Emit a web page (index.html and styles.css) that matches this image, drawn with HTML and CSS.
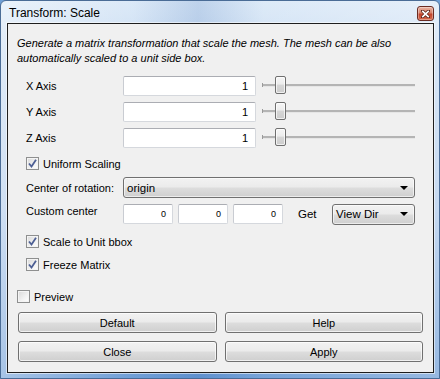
FILE: index.html
```html
<!DOCTYPE html>
<html>
<head>
<meta charset="utf-8">
<link rel="stylesheet" href="styles.css">
</head>
<body>
<div class="window">
  <div class="titlebar">
    <span class="title">Transform: Scale</span>
    <div class="close-btn">
      <svg width="9" height="8" viewBox="0 0 9 8"><path d="M1 0.5 L8 7.5 M8 0.5 L1 7.5" stroke="#5a2318" stroke-width="3.2" stroke-linecap="square"/><path d="M1.2 0.8 L7.8 7.2 M7.8 0.8 L1.2 7.2" stroke="#fff" stroke-width="1.7"/></svg>
    </div>
  </div>
  <div class="client">
    <p class="desc">Generate a matrix transformation that scale the mesh. The mesh can be also<br>automatically scaled to a unit side box.</p>
    <div class="form">
      <div class="axis-row">
        <span class="label">X Axis</span>
        <div class="field">1</div>
        <div class="slider"><span class="tick"></span><div class="thumb"></div></div>
      </div>
      <div class="axis-row">
        <span class="label">Y Axis</span>
        <div class="field">1</div>
        <div class="slider"><span class="tick"></span><div class="thumb"></div></div>
      </div>
      <div class="axis-row">
        <span class="label">Z Axis</span>
        <div class="field">1</div>
        <div class="slider"><span class="tick"></span><div class="thumb"></div></div>
      </div>
      <div class="check-row uniform">
        <span class="checkbox checked"><svg width="9" height="9" viewBox="0 0 9 9"><path d="M1 4.5 L3.5 7.5 L8 0.8" fill="none" stroke="#4d5f94" stroke-width="1.8"/></svg></span>
        <span>Uniform Scaling</span>
      </div>
      <div class="combo-row">
        <span class="label">Center of rotation:</span>
        <div class="combo wide"><span>origin</span><span class="arrow"></span></div>
      </div>
      <div class="custom-row">
        <span class="label custom-label">Custom center</span>
        <div class="small-field">0</div>
        <div class="small-field">0</div>
        <div class="small-field">0</div>
        <span class="get">Get</span>
        <div class="combo view"><span>View Dir</span><span class="arrow"></span></div>
      </div>
      <div class="check-row scale">
        <span class="checkbox checked"><svg width="9" height="9" viewBox="0 0 9 9"><path d="M1 4.5 L3.5 7.5 L8 0.8" fill="none" stroke="#4d5f94" stroke-width="1.8"/></svg></span>
        <span>Scale to Unit bbox</span>
      </div>
      <div class="check-row freeze">
        <span class="checkbox checked"><svg width="9" height="9" viewBox="0 0 9 9"><path d="M1 4.5 L3.5 7.5 L8 0.8" fill="none" stroke="#4d5f94" stroke-width="1.8"/></svg></span>
        <span>Freeze Matrix</span>
      </div>
    </div>
    <div class="check-row preview">
      <span class="checkbox"></span>
      <span>Preview</span>
    </div>
    <div class="buttons">
      <div class="btn">Default</div>
      <div class="btn">Help</div>
      <div class="btn">Close</div>
      <div class="btn">Apply</div>
    </div>
  </div>
</div>
</body>
</html>
```
FILE: styles.css
```css
* { box-sizing: border-box; }
html, body { margin: 0; padding: 0; }
body {
  width: 440px;
  height: 379px;
  overflow: hidden;
  font-family: "Liberation Sans", Arial, sans-serif;
  font-size: 11px;
  color: #000;
  background: #6f9fd6;
}
.window {
  width: 440px;
  height: 379px;
  display: flex;
  flex-direction: column;
  border: 1px solid #4a6c96;
  border-radius: 6px 6px 0 0;
  padding: 0 5px 5px 6px;
  background:
    linear-gradient(90deg, rgba(255,255,255,0.45) 0%, rgba(255,255,255,0.1) 30%, rgba(90,130,190,0.2) 45%, rgba(255,255,255,0.15) 60%, rgba(255,255,255,0.35) 100%),
    linear-gradient(180deg, #d8e7f7 0%, #c4d9f0 15%, #a9c6e9 55%, #5f93d2 100%);
}
.titlebar {
  height: 22px;
  flex: none;
  display: flex;
  align-items: center;
  justify-content: space-between;
  padding-left: 2px;
}
.title {
  font-size: 12px;
  color: #000;
  padding-top: 1px;
}
.close-btn {
  width: 17px;
  height: 15px;
  margin-top: 3px;
  border: 1px solid #6a2b22;
  border-radius: 3px;
  background: linear-gradient(180deg, #e9b3a2 0%, #d8826b 45%, #c2432b 55%, #d66a4c 100%);
  display: flex;
  align-items: center;
  justify-content: center;
  box-shadow: inset 0 0 0 1px rgba(255,255,255,0.35);
}
.client {
  flex: 1;
  background: #f0f0f0;
  border: 1px solid #1e1e1e;
  box-shadow: 0 0 0 1px rgba(255,255,255,0.55);
  display: flex;
  flex-direction: column;
}
.desc {
  margin: 12px 0 0 9px;
  font-style: italic;
  line-height: 15px;
  color: #000;
  white-space: nowrap;
}
.form {
  margin: 10px 18px 0 18px;
  display: flex;
  flex-direction: column;
}
.axis-row {
  display: grid;
  grid-template-columns: 97px 133px 1fr;
  align-items: center;
  height: 20px;
  margin-bottom: 6px;
}
.field, .small-field {
  height: 20px;
  background: #fff;
  border: 1px solid #d5d8dd;
  border-top-color: #abadb3;
  border-left-color: #c9ccd2;
  border-radius: 2px;
  text-align: right;
  padding-right: 7px;
  line-height: 18px;
}
.small-field {
  width: 50px;
  font-size: 9px;
  padding-right: 6px;
}
.slider {
  position: relative;
  height: 20px;
  margin-left: 6px;
}
.slider::before {
  content: "";
  position: absolute;
  left: 0;
  right: 0;
  top: 8px;
  height: 2px;
  background: #b4b4b4;
  border-bottom: 1px solid #e6e6e6;
}
.tick {
  position: absolute;
  left: 0;
  top: 7px;
  width: 1px;
  height: 4px;
  background: #9a9a9a;
}
.thumb {
  position: absolute;
  left: 13px;
  top: 0;
  width: 11px;
  height: 18px;
  border: 1px solid #6f6f6f;
  border-radius: 2px;
  background: linear-gradient(180deg, #f6f6f6 0%, #ececec 45%, #d6d6d6 50%, #cdcdcd 100%);
  box-shadow: inset 0 0 0 1px rgba(255,255,255,0.7);
}
.check-row {
  display: flex;
  align-items: center;
  gap: 4px;
  height: 13px;
}
.checkbox {
  width: 13px;
  height: 13px;
  flex: none;
  border: 1px solid #8e8f8f;
  background: linear-gradient(135deg, #d8d8d8 0%, #f2f2f2 60%, #ffffff 100%);
  box-shadow: inset 0 0 0 1px #f4f4f4;
  display: flex;
  align-items: center;
  justify-content: center;
}
.uniform { margin-top: 3px; }
.combo-row {
  display: flex;
  align-items: center;
  margin-top: 7px;
  height: 21px;
}
.combo-row .label { width: 97px; }
.combo {
  height: 21px;
  border: 1px solid #707070;
  border-radius: 3px;
  background: linear-gradient(180deg, #f2f2f2 0%, #ebebeb 48%, #dddddd 52%, #cfcfcf 100%);
  box-shadow: inset 0 0 0 1px rgba(255,255,255,0.6);
  display: flex;
  align-items: center;
  justify-content: space-between;
  padding: 0 6px 0 3px;
  font-size: 11.5px;
}
.combo.wide { flex: 1; }
.combo.view { width: 83px; margin-left: auto; }
.arrow {
  width: 0;
  height: 0;
  border-left: 4px solid transparent;
  border-right: 4px solid transparent;
  border-top: 4px solid #000;
}
.custom-row {
  display: flex;
  align-items: center;
  margin-top: 6px;
  height: 20px;
}
.custom-label { width: 97px; align-self: flex-start; margin-top: 1px; }
.small-field + .small-field { margin-left: 5px; }
.get { margin-left: 15px; font-size: 11.5px; }
.scale { margin-top: 11px; }
.freeze { margin-top: 10px; }
.preview { margin: 19px 0 0 9px; }
.buttons {
  display: grid;
  grid-template-columns: 1fr 1fr;
  column-gap: 8px;
  row-gap: 8px;
  margin: 9px 10px 0 10px;
}
.btn {
  height: 21px;
  border: 1px solid #707070;
  border-radius: 3px;
  background: linear-gradient(180deg, #f2f2f2 0%, #ebebeb 48%, #dddddd 52%, #cfcfcf 100%);
  box-shadow: inset 0 0 0 1px rgba(255,255,255,0.7);
  display: flex;
  align-items: center;
  justify-content: center;
  font-size: 11px;
}
```
